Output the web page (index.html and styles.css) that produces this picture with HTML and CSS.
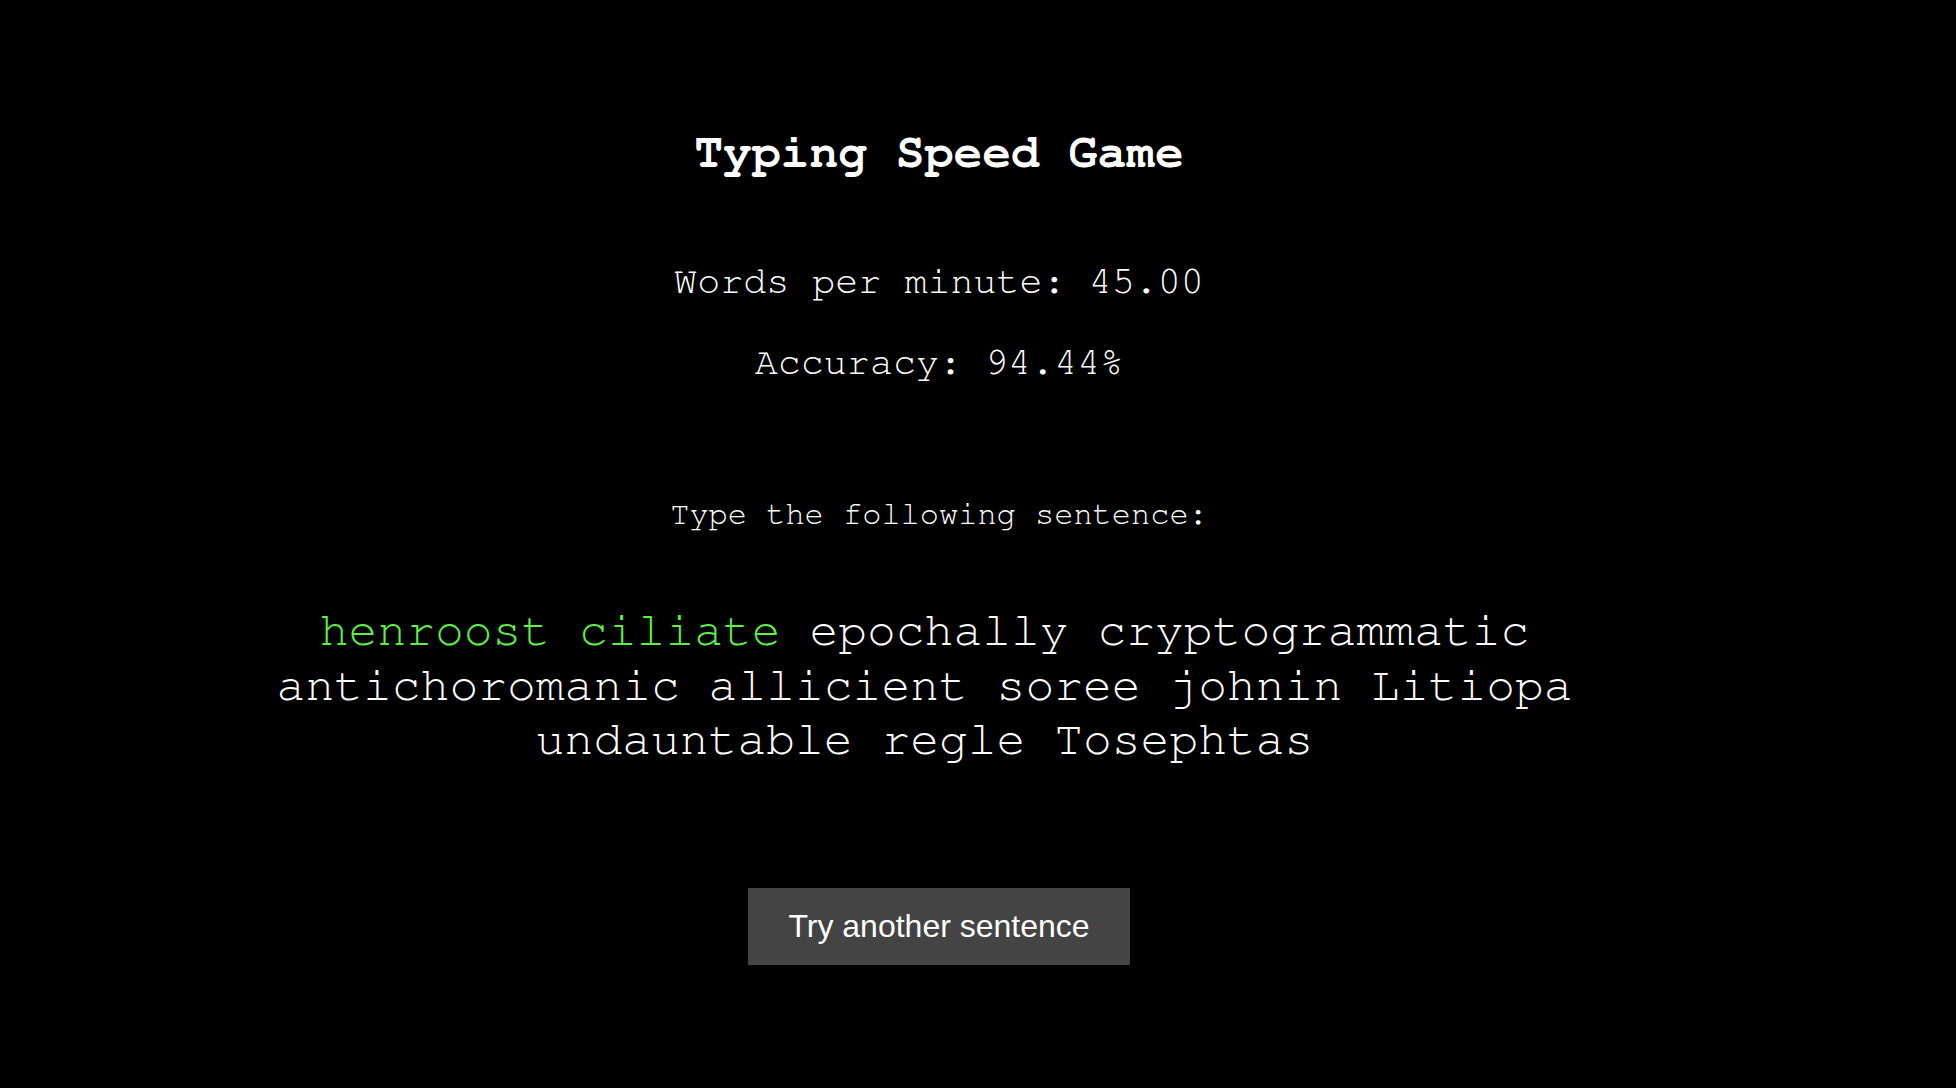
FILE: index.html
```html
<!DOCTYPE html>
<html lang="en">
<head>
<meta charset="utf-8">
<title>Typing Speed Game</title>
<link rel="stylesheet" href="styles.css">
</head>
<body>
<main class="game">
  <h1 class="title">Typing Speed Game</h1>
  <p class="stat">Words per minute: 45.00</p>
  <p class="stat">Accuracy: 94.44%</p>
  <p class="prompt">Type the following sentence:</p>
  <p class="sentence"><span class="typed">henroost ciliate</span> epochally cryptogrammatic antichoromanic allicient soree johnin Litiopa undauntable regle Tosephtas</p>
  <button class="retry" type="button">Try another sentence</button>
</main>
</body>
</html>
```

FILE: styles.css
```css
html, body {
  margin: 0;
  padding: 0;
  background: #000;
}

body {
  box-sizing: border-box;
  min-height: 100vh;
  padding: 7px 78px 0 0;
  display: flex;
  align-items: center;
  justify-content: center;
  color: #fff;
  font-family: "Nimbus Mono PS", "Nimbus Mono L", "FreeMono", "Courier New", "Liberation Mono", monospace;
  line-height: 1.1328;
}

.game {
  display: flex;
  flex-direction: column;
  align-items: center;
  text-align: center;
  max-width: 1400px;
  padding-bottom: 4px;
}

.title {
  margin: 0;
  font-size: 48px;
  font-weight: bold;
}

.stat {
  margin: 0;
  font-size: 38.4px;
}

.title + .stat {
  margin-top: 80px;
}

.stat + .stat {
  margin-top: 37px;
}

.prompt {
  margin: 112px 0 0;
  font-size: 32px;
}

.sentence {
  margin: 72px 0 0;
  padding-right: 0.6em;
  font-size: 48px;
}

.typed {
  color: #5ef046;
}

.retry {
  margin-top: 121px;
  padding: 20px 40px;
  border: none;
  background: #444;
  color: #fff;
  font-family: "Liberation Sans", Arial, sans-serif;
  font-size: 32px;
  line-height: normal;
}
```
